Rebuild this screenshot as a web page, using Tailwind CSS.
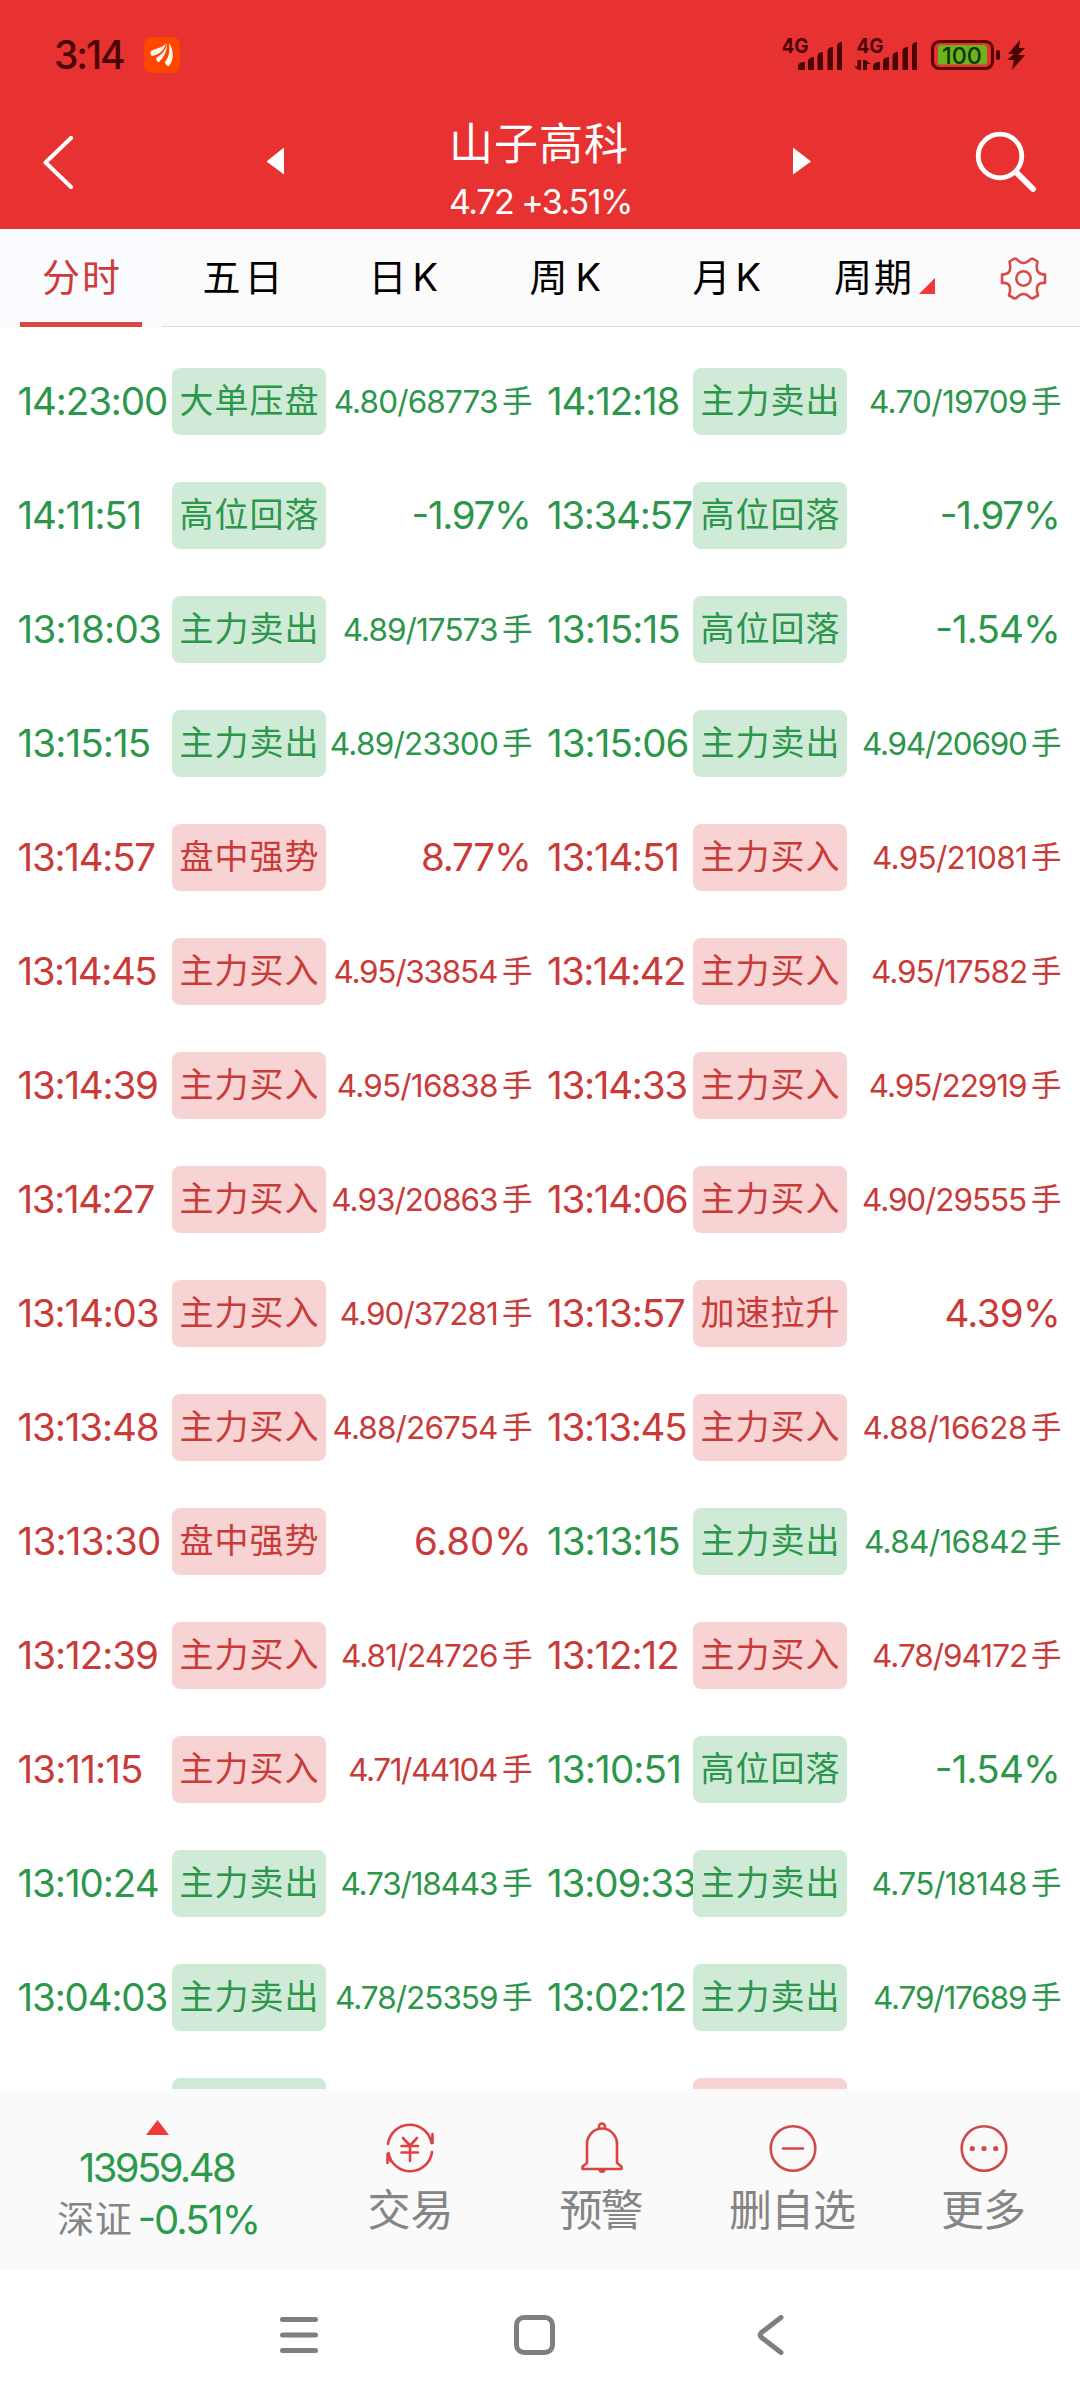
<!DOCTYPE html>
<html lang="zh-CN">
<head>
<meta charset="utf-8">
<title>山子高科</title>
<script src="https://cdn.jsdelivr.net/npm/@tailwindcss/browser@4"></script>
</head>
<body class="bg-white">
<div class="flex h-[2400px] w-[1080px] flex-col overflow-hidden bg-white font-['Inter','Noto_Sans_CJK_SC',sans-serif] leading-none whitespace-nowrap">

  <header class="h-[229px] shrink-0 bg-[#e83131] text-white">
    <div class="flex h-[109px] items-center justify-between pr-[55px] pl-14">
      <div class="flex items-center gap-5">
        <span class="text-[39px] font-medium text-[#4a0606]" data-w="68">3:14</span>
        <svg class="size-9" viewBox="0 0 36 36"><rect width="36" height="36" rx="8" fill="#ff4600"/><g fill="#fff8ee"><path d="M7 14c5-3 12-3 15-8-2 8-6 11-14 13-1 0-2-4-1-5z"/><path d="M23 6c0 9-3 14-8 19-1 1-3-2-3-4 5-3 10-7 11-15z"/><path d="M25 6c5 7 5 17 0 23-1 1-5-3-4-4 4-5 5-11 4-19z"/></g></svg>
      </div>
      <svg class="h-[36px] w-[244px] overflow-visible" viewBox="781 36 244 36" fill="#4c0505">
        <g id="signal"><text x="781.500" y="52" font-size="20.500" font-weight="700" textLength="27" lengthAdjust="spacingAndGlyphs">4G</text>
        <path d="M798 68.500v-4q1-3 4-3.500h3v7q0 1-1 1h-5zM808 69V60q0-3 5-4h1v13zM817.500 69V55q0-3 4-4h1.500v18zM827.500 69V50q0-3 4-4h1.500v23zM837 69V45q0-3 4-4h1v28z"/></g>
        <use href="#signal" x="75"/>
        <path d="M861 59v10h-2.500L854 65.500h3.500V59zM863 59h2.500l5 4H867v6h-4z"/>
        <rect x="932.500" y="40.500" width="60" height="27" rx="7" fill="none" stroke="#5d0303" stroke-width="3.200"/>
        <rect x="938" y="44" width="49" height="19.500" rx="3" fill="#6ab51e"/>
        <text x="942" y="62.500" font-size="23.500" font-weight="500" fill="#143604" textLength="40" lengthAdjust="spacingAndGlyphs">100</text>
        <rect x="996" y="49" width="4" height="10" rx="2"/>
        <path d="M1020 39l-12 14h6l-7 6h7l-2 10 13-15h-7l7-7h-6z"/>
      </svg>
    </div>
    <div class="grid h-[120px] grid-cols-[265px_550px_265px]">
      <div class="pt-[27px] pl-[42px]"><svg class="h-[56px] w-[34px]" viewBox="0 0 34 56" fill="none" stroke="#fff" stroke-width="4" stroke-linecap="round" stroke-linejoin="round"><path d="M29 2 3.500 26.500 29 51"/></svg></div>
      <div class="flex justify-between">
        <svg class="mt-[38px] h-7 w-5" viewBox="0 0 20 28"><path d="M1.500 14.500 19 0.500v27z" fill="#fff"/></svg>
        <div class="flex flex-col items-center gap-[19px] pt-[13px] pl-[3px]">
          <h1 class="text-[44px] font-normal" data-w="174">山子高科</h1>
          <p class="text-[34px]" data-w="180">4.72 +3.51%</p>
        </div>
        <svg class="mt-[38px] mr-[3px] h-7 w-5" viewBox="0 0 20 28"><path d="M19 14.500 1 0.500v27z" fill="#fff"/></svg>
      </div>
      <div class="pt-[20px] pl-[157px]"><svg class="h-[68px] w-[68px]" viewBox="972 129 68 68" fill="none" stroke="#fff" stroke-width="4.800" stroke-linecap="round"><circle cx="1000" cy="156" r="21.800"/><path d="M1016 172l17 17" stroke-width="6"/></svg></div>
    </div>
  </header>

  <nav class="grid h-[98px] shrink-0 grid-cols-[162px_162px_162px_162px_162px_142px_128px] bg-[#fbfbfb] text-[38px] text-black">
    <div class="flex flex-col items-center justify-between bg-[#fafbfe] pt-[28px] text-[#cf3a36]"><span class="pt-[1px]" data-w="76">分时</span><i class="h-[5px] w-[122px] bg-[#d94543]"></i></div>
    <div class="flex justify-center border-b border-[#e2dccd] pt-[29px]"><span class="mr-[5px]" data-w="72">五日</span></div>
    <div class="flex justify-center border-b border-[#e2dccd] pt-[29px]"><span class="ml-[2px]" data-w="63">日K</span></div>
    <div class="flex justify-center border-b border-[#e2dccd] pt-[29px]"><span class="mr-[3px]" data-w="70">周K</span></div>
    <div class="flex justify-center border-b border-[#e2dccd] pt-[29px]"><span class="mr-[4px]" data-w="67">月K</span></div>
    <div class="flex gap-[9px] border-b border-[#e2dccd] pt-[29px] pl-[25px]"><span data-w="75">周期</span><svg class="mt-[20px] size-4 shrink-0" viewBox="0 0 16 16"><path d="M16 0v16H0z" fill="#ee3a39"/></svg></div>
    <div class="flex border-b border-[#e2dccd] pt-[28px] pl-[48px]">
      <svg class="h-[43px] w-[47px]" viewBox="-23.500 -21.500 47 43" fill="none" stroke="#d94a48" stroke-width="2.600" stroke-linejoin="round"><path d="M-9-20Q-7-20-5-17.500 0-13.500 5-17.500 7-20 9-20L14-17Q12-9 15-6 17-4 21.500-4V4.500Q17 4 15 6 12 9 14.500 17L9 20Q7 20 5 17.500 0 13.500-5 17.500-7 20-9 20L-14.500 17Q-12 9-15 6-17 4-21.500 4.500V-4Q-17-4-15-6-12-9-14-17z"/><circle r="7.200"/></svg>
    </div>
  </nav>

  <main id="feed" class="h-[1762px] shrink-0 overflow-hidden pt-[18px]"></main>

  <section class="grid h-[181px] shrink-0 grid-cols-[315px_191px_191px_191px_192px] bg-[#fafafa] text-[43px] text-[#858585]">
    <div class="flex flex-col items-center pt-[31px]">
      <svg class="h-[15px] w-[23px]" viewBox="0 0 23 15"><path d="M11.500 0 23 15H0z" fill="#ee3a39"/></svg>
      <span class="mt-[13px] text-[40px] text-[#2c9a4b]" data-w="155">13959.48</span>
      <div class="mt-[12px] flex items-center gap-[9px]"><span class="pb-[2px] text-[37px]" data-w="72.500">深证</span><span class="text-[40px] text-[#2c9a4b] [font-feature-settings:'case']" data-w="117">-0.51%</span></div>
    </div>
    <div class="flex flex-col items-center gap-[13px] pt-[31px] pr-[2px]">
      <svg class="h-[56px] w-[52px]" viewBox="385 2120 52 56" fill="none" stroke="#dc4341" stroke-width="2.600" stroke-linecap="round"><path d="M389 2144a22 22 0 0 1 43.500-1M433.500 2134v10l-3-7M433 2152a22 22 0 0 1-43.500 1M388.500 2163v-10l3 8"/><path d="M404 2138l7 7.500 7-7.500M411 2145.500V2161M402.500 2146H419M402.500 2152.500H419"/></svg>
      <span data-w="80">交易</span>
    </div>
    <div class="flex flex-col items-center gap-[13px] pt-[31px]">
      <svg class="h-[56px] w-[52px]" viewBox="575.500 2120 52 56" fill="none" stroke="#dc4341" stroke-width="2.600" stroke-linejoin="round"><path d="M586.500 2163V2144a15 15.500 0 0 1 30 0v19l4.500 3.500v2.500h-39v-2.500z"/><path d="M598.500 2128.500v-2a3 3 0 0 1 6 0v2"/><path d="M598 2170h7q0 3-3.500 3t-3.500-3z" fill="#dc4341" stroke="none"/></svg>
      <span data-w="82">预警</span>
    </div>
    <div class="flex flex-col items-center gap-[13px] pt-[31px]">
      <svg class="h-[56px] w-[52px]" viewBox="0 0 52 56" fill="none" stroke="#d24a48" stroke-width="2.600" stroke-linecap="round"><circle cx="26" cy="28.500" r="22.300"/><path d="M16 28.500h20"/></svg>
      <span data-w="125">删自选</span>
    </div>
    <div class="flex flex-col items-center gap-[13px] pt-[31px] pr-px">
      <svg class="h-[56px] w-[52px]" viewBox="0 0 52 56" fill="none" stroke="#d24a48" stroke-width="2.600"><circle cx="26" cy="28.500" r="22.300"/><g fill="#d24a48" stroke="none"><circle cx="14.300" cy="28.500" r="2.600"/><circle cx="26" cy="28.500" r="2.600"/><circle cx="37.700" cy="28.500" r="2.600"/></g></svg>
      <span data-w="81">更多</span>
    </div>
  </section>

  <footer class="flex h-[130px] items-center gap-[195px] pl-[279px]">
    <svg class="size-10" viewBox="0 0 40 40" fill="none" stroke="#7f7f7f" stroke-width="5" stroke-linecap="round"><path d="M3.500 4.500h33M3.500 20h33M3.500 35.500h33"/></svg>
    <svg class="h-10 w-[41px]" viewBox="0 0 41 40" fill="none" stroke="#7f7f7f" stroke-width="5"><rect x="2.500" y="2.500" width="36" height="35" rx="7.500"/></svg>
    <svg class="ml-[5px] size-10" viewBox="0 0 40 40" fill="none" stroke="#7f7f7f" stroke-width="5" stroke-linecap="round" stroke-linejoin="round"><path d="M26 2.500 6.500 17.500Q4 20 6.500 22.500L26 37.500"/></svg>
  </footer>
</div>

<script>
// g = down (green), r = up (red); each entry: tone, time, time width, label, value, value width
const feed = [
  ['g','14:23:00',147.500,'大单压盘','4.80/68773',162.3], ['g','14:12:18',130.6,'主力卖出','4.70/19709',156],
  ['g','14:11:51',121,'高位回落','-1.97%',114.4], ['g','13:34:57',143.500,'高位回落','-1.97%',115.3],
  ['g','13:18:03',141.500,'主力卖出','4.89/17573',153.3], ['g','13:15:15',131.300,'高位回落','-1.54%',119.800],
  ['g','13:15:15',131.300,'主力卖出','4.89/23300',166.2], ['g','13:15:06',139.500,'主力卖出','4.94/20690',163],
  ['r','13:14:57',135.800,'盘中强势','8.77%',105.1], ['r','13:14:51',129.200,'主力买入','4.95/21081',152.9],
  ['r','13:14:45',137.800,'主力买入','4.95/33854',162.6], ['r','13:14:42',136.100,'主力买入','4.95/17582',154.1],
  ['r','13:14:39',138.500,'主力买入','4.95/16838',159.300], ['r','13:14:33',138.200,'主力买入','4.95/22919',156.2],
  ['r','13:14:27',135.100,'主力买入','4.93/20863',164.7], ['r','13:14:06',138.800,'主力买入','4.90/29555',163],
  ['r','13:14:03',139.200,'主力买入','4.90/37281',156.3], ['r','13:13:57',136.100,'加速拉升','4.39%',110.500],
  ['r','13:13:48',139.200,'主力买入','4.88/26754',163.500], ['r','13:13:45',138.200,'主力买入','4.88/16628',162.500],
  ['r','13:13:30',140.500,'盘中强势','6.80%',112], ['g','13:13:15',131.200,'主力卖出','4.84/16842',161],
  ['r','13:12:39',138.500,'主力买入','4.81/24726',155], ['r','13:12:12',129.200,'主力买入','4.78/94172',153],
  ['r','13:11:15',123.400,'主力买入','4.71/44104',147.800], ['g','13:10:51',131.200,'高位回落','-1.54%',120.200],
  ['g','13:10:24',139.200,'主力卖出','4.73/18443',155.500], ['g','13:09:33',147,'主力卖出','4.75/18148',153.500],
  ['g','13:04:03',148,'主力卖出','4.78/25359',161], ['g','13:02:12',136.800,'主力卖出','4.79/17689',152],
  ['g','','','','',''], ['r','','','','','']
];
const text = { g: 'text-[#2c964a]', r: 'text-[#c93b38]' };
const tag = { g: 'bg-[#d0ead8]', r: 'bg-[#f7d3d3]' };
const timeCol = ['w-[172px] pl-[18.5px]', 'w-[163px] pl-[18px]'];
const valueCol = ['w-[204px]', 'w-[212px]'];
const cell = ([tone, time, tw, label, value, vw], i) => {
  const side = i % 2;
  let v = '';
  if (value.endsWith('%')) v = `<span class="mr-[2px] text-[38.5px] [font-feature-settings:'case']" data-w="${vw}">${value}</span>`;
  else if (value) v = `<span class="pt-px text-[31.5px]" data-w="${vw}">${value}</span><span class="ml-[6px] text-[30.5px]" data-w="27">手</span>`;
  return `<div class="flex h-[114px] items-center pb-[2px] ${text[tone]}">
    <div class="flex shrink-0 overflow-hidden ${timeCol[side]}">${time ? `<span class="py-2 text-[38.5px]" data-w="${tw}">${time}</span>` : ''}</div>
    <div class="flex h-[67px] w-[154px] shrink-0 items-center justify-center rounded-lg pb-px pl-px text-[34px] tracking-[1px] ${tag[tone]}">${label}</div>
    <div class="flex shrink-0 items-center justify-end ${valueCol[side]}">${v}</div>
  </div>`;
};
document.getElementById('feed').innerHTML = `<div class="grid grid-cols-[530px_550px]">${feed.map(cell).join('')}</div>`;

// Spread each label's characters over the given width and trim its side bearings.
const ctx = document.createElement('canvas').getContext('2d');
function fit() {
  document.querySelectorAll('[data-w]').forEach(el => {
    el.style.margin = '';
    const s = getComputedStyle(el), t = el.textContent, w = parseFloat(el.dataset.w);
    const ml = parseFloat(s.marginLeft), mr = parseFloat(s.marginRight);
    ctx.font = `${s.fontWeight} ${s.fontSize} ${s.fontFamily}`;
    const m = ctx.measureText(t), left = -m.actualBoundingBoxLeft, n = t.length;
    const ink = m.actualBoundingBoxRight - left;
    const ls = n > 1 ? (w - ink) / (n - 1) : 0;
    el.style.letterSpacing = ls + 'px';
    el.style.marginLeft = (ml - left) + 'px';
    el.style.marginRight = (mr - (m.width + n * ls - w - left)) + 'px';
  });
}
fit();
requestAnimationFrame(fit);
window.addEventListener('load', fit);
</script>
</body>
</html>
